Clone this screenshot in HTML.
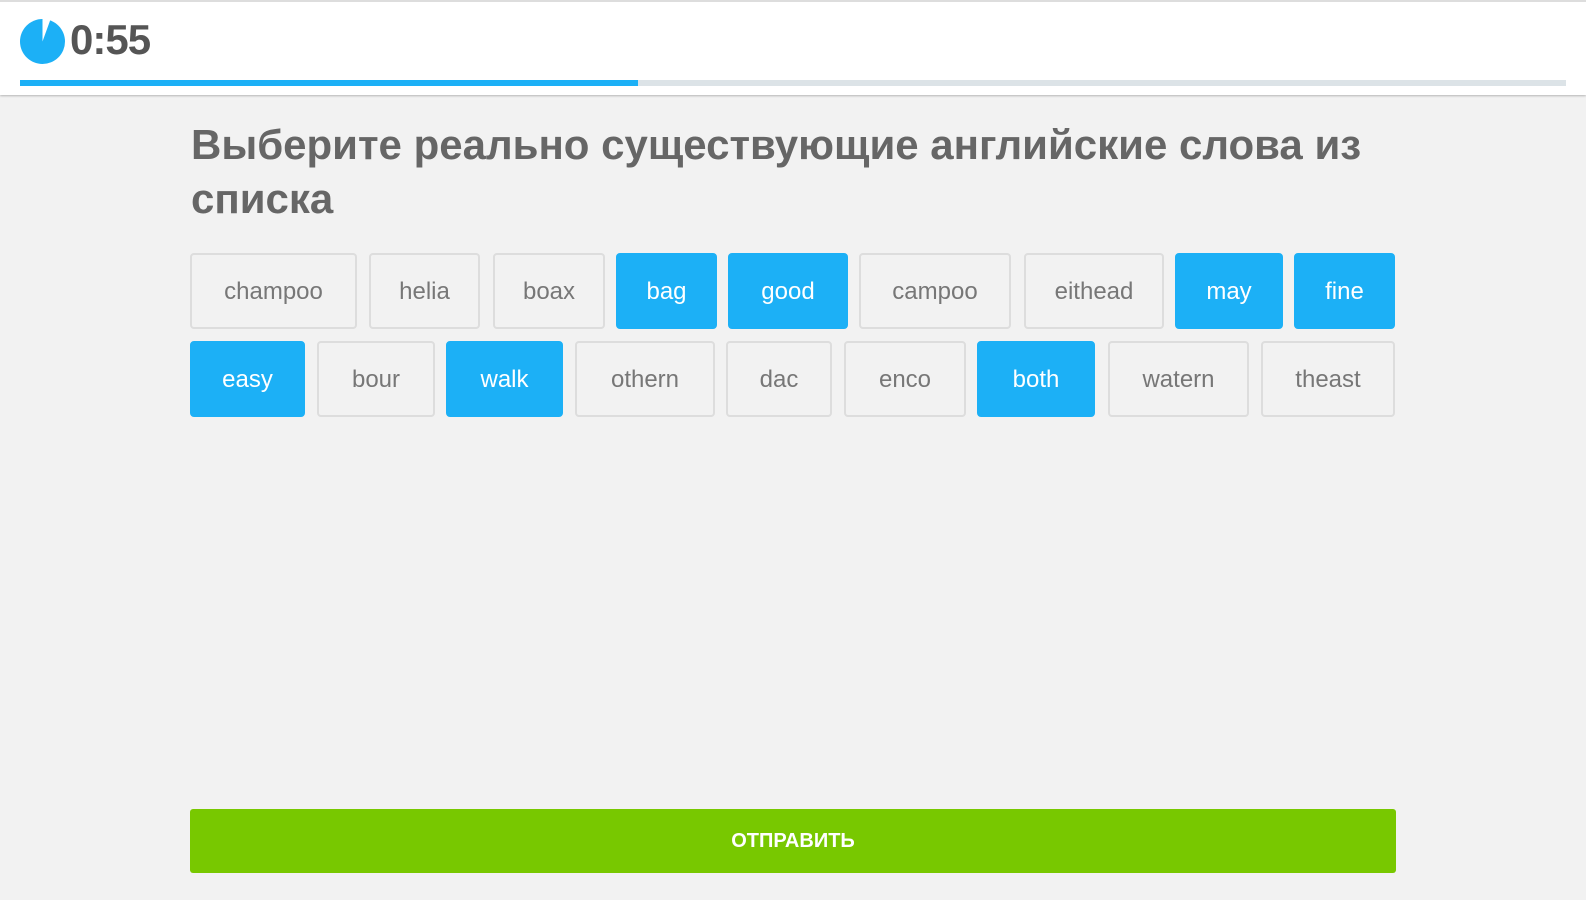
<!DOCTYPE html>
<html><head><meta charset="utf-8"><style>
*{margin:0;padding:0;box-sizing:border-box}
body{width:1586px;height:900px;background:#f2f2f2;font-family:"Liberation Sans",sans-serif;position:relative;overflow:hidden}
.hdr{position:absolute;left:0;top:0;width:1586px;height:95px;background:#fff;border-top:2px solid #ddd;box-shadow:0 1px 2px rgba(0,0,0,.25)}
.clock{position:absolute;left:20px;top:17px}
.time{position:absolute;left:70px;top:14px;font-size:42px;font-weight:bold;color:#555;letter-spacing:-1px}
.bar{position:absolute;left:20px;top:78px;width:1546px;height:6px;background:#dce3e7}
.bar i{display:block;width:618px;height:6px;background:#1cb0f6}
h1{position:absolute;left:191px;top:118px;width:1230px;font-size:42px;line-height:54px;font-weight:bold;color:#666;letter-spacing:0}
.b{position:absolute;height:76px;border:2px solid #ddd;border-radius:4px;color:#777;font-size:24px;display:flex;align-items:center;justify-content:center;background:#f2f2f2;padding-top:2px}
.s{background:#1cb0f6;border-color:#1cb0f6;color:#fff}
.btn{position:absolute;left:190px;top:809px;width:1206px;height:64px;background:#78c800;border-radius:3px;color:#fff;font-weight:bold;font-size:20px;display:flex;align-items:center;justify-content:center}
</style></head><body>
<div class="hdr">
<svg class="clock" width="45" height="45" viewBox="0 0 45 45"><circle cx="22.5" cy="22.5" r="22.5" fill="#1cb0f6"/><path d="M22.5 22.5 L22.5 -1 L31 -1 Z" fill="#fff"/></svg>
<div class="time">0:55</div>
<div class="bar"><i></i></div>
</div>
<h1>Выберите реально существующие английские слова из списка</h1>
<div class="b" style="left:190px;top:253px;width:167px">champoo</div>
<div class="b" style="left:369px;top:253px;width:111px">helia</div>
<div class="b" style="left:493px;top:253px;width:112px">boax</div>
<div class="b s" style="left:616px;top:253px;width:101px">bag</div>
<div class="b s" style="left:728px;top:253px;width:120px">good</div>
<div class="b" style="left:859px;top:253px;width:152px">campoo</div>
<div class="b" style="left:1024px;top:253px;width:140px">eithead</div>
<div class="b s" style="left:1175px;top:253px;width:108px">may</div>
<div class="b s" style="left:1294px;top:253px;width:101px">fine</div>
<div class="b s" style="left:190px;top:341px;width:115px">easy</div>
<div class="b" style="left:317px;top:341px;width:118px">bour</div>
<div class="b s" style="left:446px;top:341px;width:117px">walk</div>
<div class="b" style="left:575px;top:341px;width:140px">othern</div>
<div class="b" style="left:726px;top:341px;width:106px">dac</div>
<div class="b" style="left:844px;top:341px;width:122px">enco</div>
<div class="b s" style="left:977px;top:341px;width:118px">both</div>
<div class="b" style="left:1108px;top:341px;width:141px">watern</div>
<div class="b" style="left:1261px;top:341px;width:134px">theast</div>
<div class="btn">ОТПРАВИТЬ</div>
</body></html>
